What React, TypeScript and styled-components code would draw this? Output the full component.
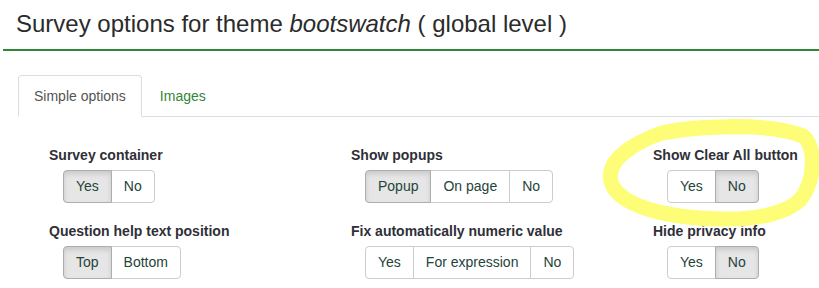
import React from 'react'
import styled, { createGlobalStyle, css } from 'styled-components'

const green = '#328637'

const GlobalStyle = createGlobalStyle`
  html, body {
    margin: 0;
    padding: 0;
    background: #fff;
  }
  body {
    font-family: "Liberation Sans", Arial, sans-serif;
    font-size: 14px;
    color: #333;
  }
`;

const Page = styled.div`
  position: relative;
  width: 819px;
  height: 288px;
  overflow: hidden;
`;

const Header = styled.div`
  margin-left: 3px;
  padding: 10px 0 11px 13px;
  border-bottom: 2px solid ${green};
`;

const Title = styled.h1`
  margin: 0;
  font-size: 24px;
  line-height: 28px;
  font-weight: normal;
  color: #2b2b2b;
  em {
    font-style: italic;
  }
`;

const TabList = styled.ul`
  display: flex;
  list-style: none;
  margin: 24px 0 0 18px;
  padding: 0;
  border-bottom: 1px solid #ddd;
`;

const Tab = styled.li<{ $active?: boolean }>`
  margin: 0 2px -1px 0;
  padding: 10px 15px;
  line-height: 20px;
  border: 1px solid transparent;
  border-radius: 4px 4px 0 0;
  color: ${green};
  cursor: pointer;
  ${p => p.$active && css`
    color: #555;
    background: #fff;
    border-color: #ddd #ddd transparent;
  `}
`;

const Options = styled.div`
  display: grid;
  grid-template-columns: 302px 302px auto;
  row-gap: 18px;
  padding: 28px 0 0 49px;
`;

const Field = styled.div`
  display: flex;
  flex-direction: column;
  align-items: flex-start;
`;

const Label = styled.label`
  font-weight: bold;
  font-size: 14px;
  line-height: 20px;
  color: #2f2f38;
  margin-bottom: 5px;
`;

const Group = styled.div`
  display: inline-flex;
  margin-left: 14px;
`;

const Toggle = styled.button<{ $active?: boolean }>`
  font-family: inherit;
  font-size: 14px;
  line-height: 19px;
  padding: 6px 12px;
  color: #24443a;
  background: #fff;
  border: 1px solid #ccc;
  border-radius: 0;
  margin-left: -1px;
  cursor: pointer;
  &:first-child {
    margin-left: 0;
    border-radius: 4px 0 0 4px;
  }
  &:last-child {
    border-radius: 0 4px 4px 0;
  }
  ${p => p.$active && css`
    position: relative;
    z-index: 1;
    background: #e6e6e6;
    border-color: #adadad;
    box-shadow: inset 0 3px 5px rgba(0, 0, 0, 0.125);
  `}
`;

const Scribble = styled.svg`
  position: absolute;
  left: 0;
  top: 0;
  pointer-events: none;
`;

type Option = { label: string; choices: string[]; active: number }

const options: Option[] = [
  { label: 'Survey container', choices: ['Yes', 'No'], active: 0 },
  { label: 'Show popups', choices: ['Popup', 'On page', 'No'], active: 0 },
  { label: 'Show Clear All button', choices: ['Yes', 'No'], active: 1 },
  { label: 'Question help text position', choices: ['Top', 'Bottom'], active: 0 },
  { label: 'Fix automatically numeric value', choices: ['Yes', 'For expression', 'No'], active: -1 },
  { label: 'Hide privacy info', choices: ['Yes', 'No'], active: 1 },
]

export default function App() {
  return (
    <Page>
      <GlobalStyle />
      <Header>
        <Title>Survey options for theme <em>bootswatch</em> ( global level )</Title>
      </Header>
      <TabList>
        <Tab $active>Simple options</Tab>
        <Tab>Images</Tab>
      </TabList>
      <Options>
        {options.map(o => (
          <Field key={o.label}>
            <Label>{o.label}</Label>
            <Group>
              {o.choices.map((c, i) => (
                <Toggle key={c} $active={i === o.active}>{c}</Toggle>
              ))}
            </Group>
          </Field>
        ))}
      </Options>
      {/* highlighter marker ring around the Clear All option */}
      <Scribble width="819" height="288" viewBox="0 0 819 288">
        <path
          d="M662 133 C 690 126, 770 122, 803 136 C 816 146, 816 180, 800 200 C 785 214, 755 220, 722 219 C 685 219, 640 212, 620 195 C 605 182, 608 165, 625 152 C 638 142, 650 137, 662 133 C 690 128, 720 126, 745 127"
          fill="none"
          stroke="#fdfd78"
          strokeWidth="15"
          strokeLinecap="round"
          strokeLinejoin="round"
        />
      </Scribble>
    </Page>
  )
}
